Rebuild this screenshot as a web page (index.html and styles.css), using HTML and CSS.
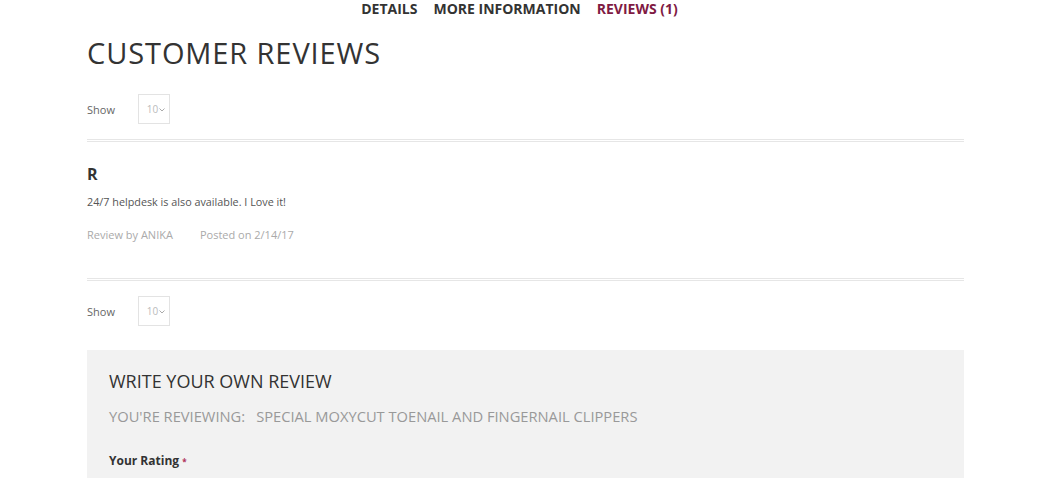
FILE: index.html
```html
<!DOCTYPE html>
<html>
<head>
<meta charset="utf-8">
<link rel="stylesheet" href="styles.css">
</head>
<body>
<nav class="tabs">
  <span class="tab">DETAILS</span>
  <span class="tab">MORE INFORMATION</span>
  <span class="tab active">REVIEWS (1)</span>
</nav>
<main class="content">
  <h2 class="title">CUSTOMER REVIEWS</h2>
  <div class="toolbar toolbar-top">
    <span class="show">Show</span>
    <span class="select">10<svg class="chev" width="6" height="4" viewBox="0 0 6 4"><path d="M0.5 0.5 L3 3 L5.5 0.5" fill="none" stroke="#aaa" stroke-width="1"/></svg></span>
  </div>
  <div class="sep sep-top"></div>
  <div class="review">
    <div class="review-title">R</div>
    <p class="review-text">24/7 helpdesk is also available. I Love it!</p>
    <div class="review-meta"><span>Review by ANIKA</span><span>Posted on 2/14/17</span></div>
  </div>
  <div class="sep"></div>
  <div class="toolbar toolbar-bottom">
    <span class="show">Show</span>
    <span class="select">10<svg class="chev" width="6" height="4" viewBox="0 0 6 4"><path d="M0.5 0.5 L3 3 L5.5 0.5" fill="none" stroke="#aaa" stroke-width="1"/></svg></span>
  </div>
  <section class="write">
    <h3 class="write-title">WRITE YOUR OWN REVIEW</h3>
    <div class="reviewing"><span>YOU'RE REVIEWING:</span><span>SPECIAL MOXYCUT TOENAIL AND FINGERNAIL CLIPPERS</span></div>
    <div class="rating">Your Rating <span class="req">*</span></div>
  </section>
</main>
</body>
</html>
```
FILE: styles.css
```css
* { box-sizing: border-box; }
html, body { margin: 0; padding: 0; background: #fff; }
body { font-family: "Open Sans", "DejaVu Sans", sans-serif; color: #333; height: 478px; overflow: hidden; }
.tabs { display: flex; justify-content: center; gap: 16px; height: 18px; align-items: center; padding-right: 14px; }
.tab { font-weight: 700; font-size: 14px; color: #333; line-height: 18px; }
.tab.active { color: #7f1a43; }
.content { margin: 0 89px 0 87px; }
.title { font-weight: 400; font-size: 29px; margin: 18px 0 0; line-height: 34px; color: #333; letter-spacing: 0.9px; }
.toolbar { display: flex; align-items: center; height: 30px; }
.toolbar-top { margin-top: 24px; }
.toolbar-bottom { margin-top: 15px; }
.show { font-size: 11px; color: #666; width: 51px; }
.select { width: 32px; height: 30px; border: 1px solid #e3e3e3; display: flex; align-items: center; justify-content: center; font-size: 10px; color: #bbb; gap: 1px; padding-left: 4px; }
.chev { margin-top: 1px; }
.sep { border-top: 1px solid #e6e6e6; border-bottom: 1px solid #e6e6e6; height: 3px; }
.sep-top { margin-top: 15px; }
.review { padding-top: 23px; height: 136px; }
.review-title { font-weight: 700; font-size: 16px; line-height: 18px; color: #333; }
.review-text { margin: 12px 0 0; font-size: 10.8px; color: #555; line-height: 14px; }
.review-meta { display: flex; gap: 27px; margin-top: 19px; font-size: 11px; color: #aaa; line-height: 14px; }
.write { background: #f2f2f2; margin-top: 24px; padding: 20px 22px 0; height: 140px; }
.write-title { margin: 0; font-weight: 400; font-size: 18px; line-height: 22px; color: #333; }
.reviewing { display: flex; gap: 11px; margin-top: 15px; font-size: 14.7px; color: #999; line-height: 18px; }
.rating { margin-top: 28px; font-weight: 700; font-size: 12px; color: #333; line-height: 16px; }
.req { color: #b0305a; font-size: 8px; vertical-align: middle; }
```
